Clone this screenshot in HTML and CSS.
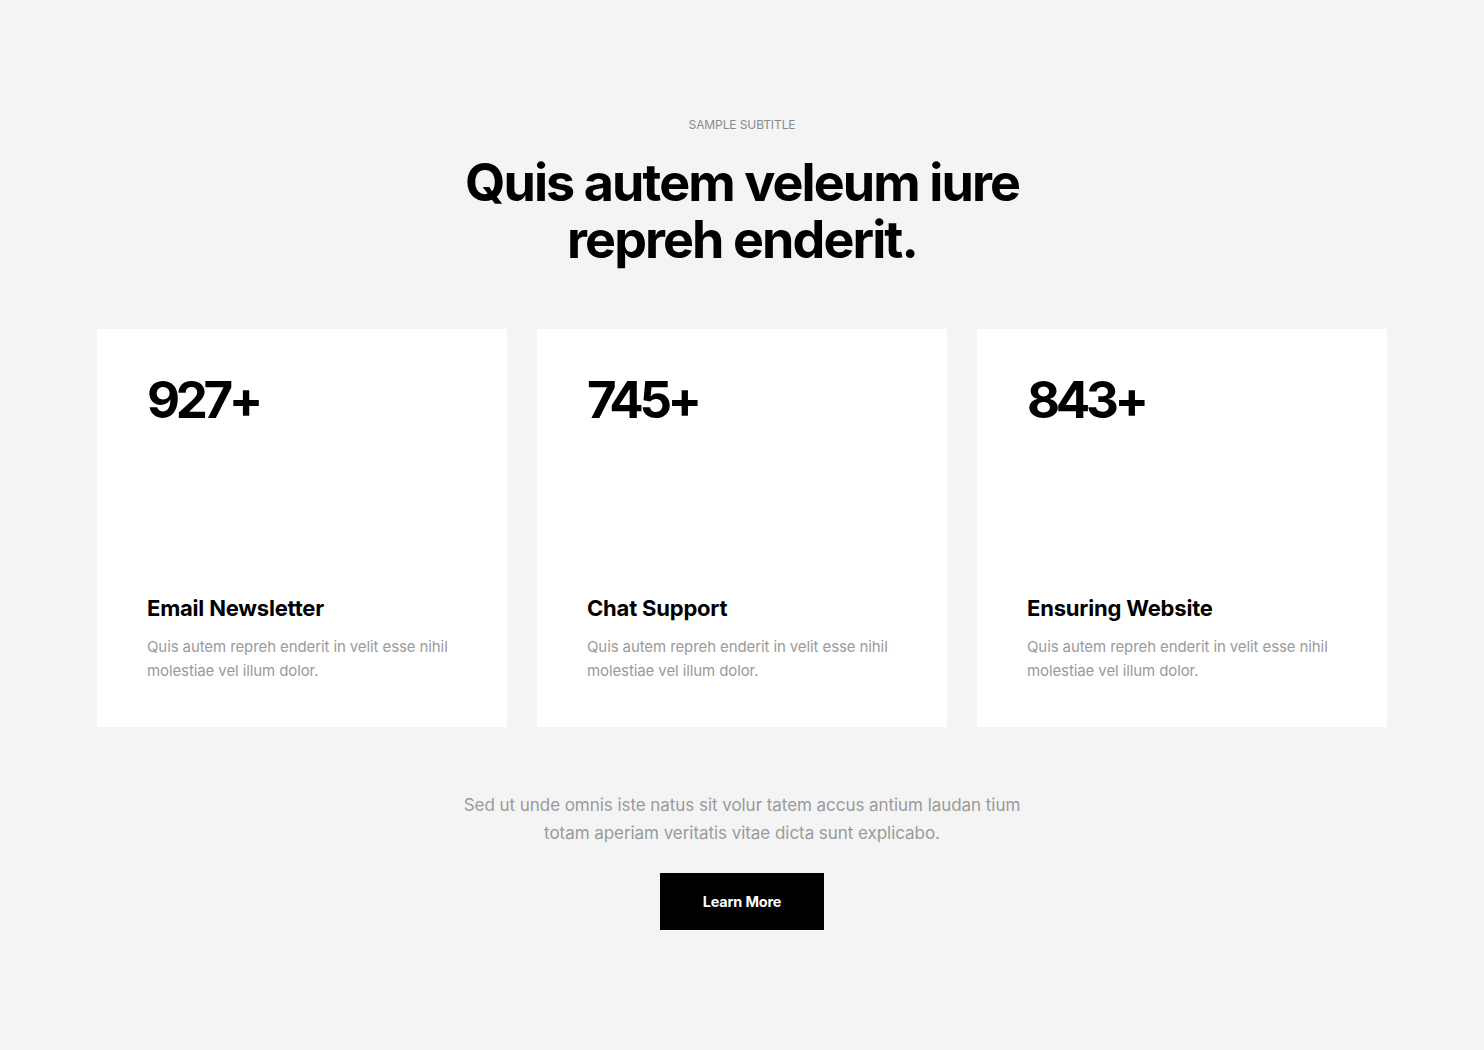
FILE: index.html
```html
<!DOCTYPE html>
<html lang="en">
<head>
<meta charset="utf-8">
<title>Stats</title>
<link rel="stylesheet" href="styles.css">
</head>
<body>
<section class="section">
  <header class="head">
    <p class="subtitle">Sample Subtitle</p>
    <h1 class="title">Quis autem veleum iure<br>repreh enderit.</h1>
  </header>
  <div class="cards">
    <article class="card">
      <div class="num">927+</div>
      <div class="card-body">
        <h3 class="card-title">Email Newsletter</h3>
        <p class="card-text">Quis autem repreh enderit in velit esse nihil molestiae vel illum dolor.</p>
      </div>
    </article>
    <article class="card">
      <div class="num">745+</div>
      <div class="card-body">
        <h3 class="card-title">Chat Support</h3>
        <p class="card-text">Quis autem repreh enderit in velit esse nihil molestiae vel illum dolor.</p>
      </div>
    </article>
    <article class="card">
      <div class="num">843+</div>
      <div class="card-body">
        <h3 class="card-title">Ensuring Website</h3>
        <p class="card-text">Quis autem repreh enderit in velit esse nihil molestiae vel illum dolor.</p>
      </div>
    </article>
  </div>
  <div class="foot">
    <p class="foot-text">Sed ut unde omnis iste natus sit volur tatem accus antium laudan tium<br>totam aperiam veritatis vitae dicta sunt explicabo.</p>
    <a class="btn" href="#">Learn More</a>
  </div>
</section>
</body>
</html>
```
FILE: styles.css
```css
* { box-sizing: border-box; }
html, body { margin: 0; padding: 0; }
body {
  background: #f4f4f4;
  font-family: Inter, "Noto Sans", sans-serif;
  color: #000;
}
.section {
  padding: 117px 97px 120px;
}
.head { text-align: center; }
.subtitle {
  margin: 0;
  font-size: 12px;
  line-height: 16px;
  text-transform: uppercase;
  color: #8a8a8a;
  letter-spacing: -0.1px;
}
.title {
  margin: 21px 0 0;
  font-size: 52px;
  line-height: 57px;
  font-weight: 700;
  letter-spacing: -1.9px;
}
.cards {
  margin-top: 61px;
  display: grid;
  grid-template-columns: repeat(3, 1fr);
  gap: 30px;
}
.card {
  background: #fff;
  height: 398px;
  padding: 39px 50px 0 50px;
  display: flex;
  flex-direction: column;
}
.num {
  font-size: 51px;
  line-height: 64px;
  font-weight: 700;
  letter-spacing: -4.4px;
}
.card-body { margin-top: 161px; }
.card-title {
  margin: 0;
  font-size: 22px;
  line-height: 30px;
  font-weight: 700;
  letter-spacing: -0.2px;
}
.card-text {
  margin: 12px 0 0;
  font-size: 15px;
  line-height: 24px;
  color: #9a9a9a;
  letter-spacing: -0.1px;
}
.foot {
  margin-top: 64px;
  display: flex;
  flex-direction: column;
  align-items: center;
}
.foot-text {
  margin: 0;
  text-align: center;
  font-size: 17px;
  line-height: 28px;
  color: #9a9a9a;
  letter-spacing: -0.05px;
}
.btn {
  margin-top: 26px;
  display: flex;
  align-items: center;
  justify-content: center;
  width: 164px;
  height: 57px;
  background: #000;
  color: #fff;
  text-decoration: none;
  font-size: 14.5px;
  font-weight: 700;
  letter-spacing: -0.2px;
}
```
